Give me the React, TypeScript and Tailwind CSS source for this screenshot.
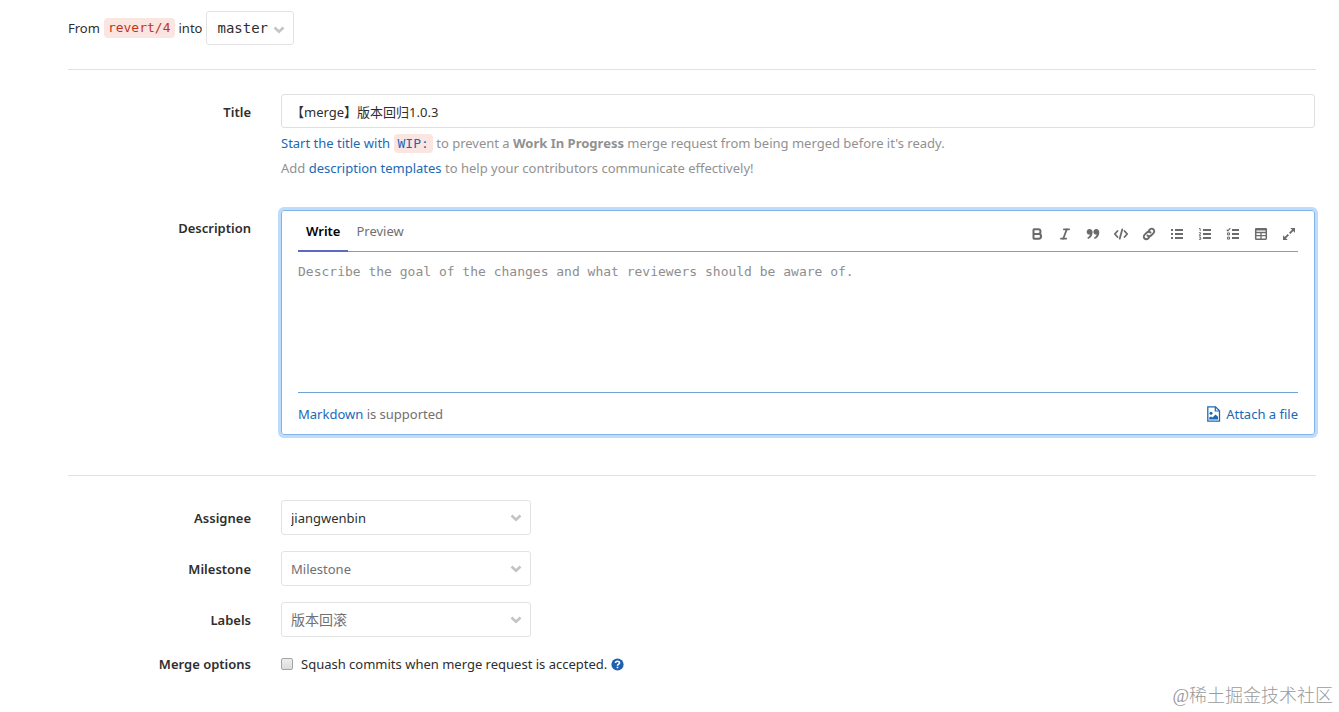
import React, { useState } from "react";
import { Bold, Italic } from "lucide-react";
import { clsx } from "clsx";

const monoClass = "font-['DejaVu_Sans_Mono',monospace]";
const codeClass = clsx(monoClass, "rounded-sm bg-[#fbe5e1] px-1 py-0.5 text-[13px] leading-4");
const linkClass = "text-[#1b69b6] hover:underline";
const labelClass = "text-right font-semibold";
const rowClass = "grid grid-cols-[183px_minmax(0,1fr)] gap-x-[30px] pr-px";

const QuoteIcon = () => (
  <svg width="16" height="16" viewBox="0 0 16 16" fill="currentColor">
    <path d="M4.6 3C6.5 3 7.6 4.4 7.6 6.3c0 3.300-1.700 5.800-4.600 6.700l-.7-1.300c1.500-.7 2.400-1.700 2.600-3.100-1.800.2-3.200-1-3.200-2.700C1.700 4.200 3 3 4.600 3z" />
    <path d="M11.300 3c1.900 0 3 1.400 3 3.300 0 3.300-1.700 5.800-4.600 6.700L9 11.700c1.500-.7 2.400-1.700 2.600-3.100-1.800.2-3.200-1-3.200-2.700C8.400 4.200 9.700 3 11.300 3z" />
  </svg>
);

const CodeIcon = () => (
  <svg width="16" height="16" viewBox="0 0 16 16" fill="none" stroke="currentColor" strokeWidth="1.800" strokeLinecap="round" strokeLinejoin="round">
    <path d="M4.500 5 1.800 8l2.700 3M11.500 5l2.700 3-2.700 3M9.300 3.300 6.700 12.700" />
  </svg>
);

const LinkIcon = () => (
  <svg width="16" height="16" viewBox="0 0 16 16" fill="none" stroke="currentColor" strokeWidth="1.900" strokeLinecap="round">
    <path d="M6.500 9.500a2.500 2.500 0 0 0 3.600 0l2.400-2.400a2.500 2.500 0 0 0-3.600-3.600L7.800 4.600" />
    <path d="M9.500 6.500a2.500 2.500 0 0 0-3.600 0L3.500 8.900a2.500 2.500 0 0 0 3.600 3.600l1.100-1.100" />
  </svg>
);

const BulletListIcon = () => (
  <svg width="16" height="16" viewBox="0 0 16 16" fill="currentColor">
    <path d="M2 3h2v2H2zM2 7h2v2H2zM2 11h2v2H2zM6 3h8v2H6zM6 7h8v2H6zM6 11h8v2H6z" />
  </svg>
);

const NumberListIcon = () => (
  <svg width="16" height="16" viewBox="0 0 16 16" fill="currentColor">
    <path d="M6 3h8v2H6zM6 7h8v2H6zM6 11h8v2H6z" />
    <path d="M2 2.500h1.200V5M1.900 6.700h1.700v1.200L2 9.300h2M1.900 11h1.800l-.8 1.100h.9v1.300H1.900" fill="none" stroke="currentColor" strokeWidth=".9" />
  </svg>
);

const TaskListIcon = () => (
  <svg width="16" height="16" viewBox="0 0 16 16" fill="currentColor">
    <path d="M7 3h7v2H7zM7 7h7v2H7zM7 11h7v2H7z" />
    <path d="m1.700 3.600 1.200 1.200 2.400-2.600" fill="none" stroke="currentColor" strokeWidth="1.200" />
    <path d="M2.500 6.900h2v2h-2zM2.500 11.100h2v2h-2z" fill="none" stroke="currentColor" strokeWidth="1" />
  </svg>
);

const TableIcon = () => (
  <svg width="16" height="16" viewBox="0 0 16 16" fill="none" stroke="currentColor">
    <rect x="2.700" y="2.700" width="10.600" height="10.600" rx=".7" strokeWidth="1.500" />
    <path d="M2.500 3.500h11" strokeWidth="2" />
    <path d="M2.500 6.500h11M2.500 9.700h11M8 6v7" strokeWidth="1.300" />
  </svg>
);

const ExpandIcon = () => (
  <svg width="16" height="16" viewBox="0 0 16 16" fill="currentColor">
    <path d="M9.300 2H14v4.700zM2 9.300 6.700 14H2z" />
    <path d="m8.700 7.300 3.500-3.500M7.300 8.700l-3.500 3.500" stroke="currentColor" strokeWidth="1.900" />
  </svg>
);

const FileImageIcon = () => (
  <svg width="16" height="16" viewBox="0 0 16 16" className="shrink-0">
    <path d="M1.800.8h7.700l4 4v10.400H1.800z" fill="none" stroke="currentColor" strokeWidth="1.300" />
    <path d="M9.300 1v4h4" fill="none" stroke="currentColor" strokeWidth="1.200" />
    <circle cx="5" cy="7.300" r="1.500" fill="currentColor" />
    <path d="M3.200 13.500v-2l1.800-1 1.500 1 3-3 2.500 2.300v2.700z" fill="currentColor" />
  </svg>
);

const QuestionIcon = () => (
  <svg width="13" height="13" viewBox="0 0 16 16">
    <circle cx="8" cy="8" r="7.500" fill="currentColor" />
    <path d="M5.500 6.200C5.600 4.700 6.600 4 8 4s2.500.8 2.500 2.100C10.500 7.600 8 7.700 8 9.600" fill="none" stroke="#fff" strokeWidth="2" />
    <path d="M7 10.700h2v1.900H7z" fill="#fff" />
  </svg>
);

const Chevron = ({ className }: { className?: string }) => (
  <svg width="12" height="8" viewBox="0 0 12 8" className={clsx("pointer-events-none absolute", className)}>
    <path d="m1.500 1.500 4.500 4.300 4.500-4.300" fill="none" stroke="#c4c4c4" strokeWidth="2.600" />
  </svg>
);

const tools = [
  { name: "Bold", icon: <Bold size={14} strokeWidth={3.5} /> },
  { name: "Italic", icon: <Italic size={14} strokeWidth={3} /> },
  { name: "Quote", icon: <QuoteIcon /> },
  { name: "Code", icon: <CodeIcon /> },
  { name: "Link", icon: <LinkIcon /> },
  { name: "Bullet list", icon: <BulletListIcon /> },
  { name: "Numbered list", icon: <NumberListIcon /> },
  { name: "Task list", icon: <TaskListIcon /> },
  { name: "Table", icon: <TableIcon /> },
  { name: "Full screen", icon: <ExpandIcon /> },
];

interface SelectRowProps {
  id: string;
  label: string;
  value: string;
  className?: string;
}

const SelectRow: React.FC<SelectRowProps> = ({ id, label, value, className }) => (
  <div className={clsx(rowClass, "items-center")}>
    <label htmlFor={id} className={labelClass}>{label}</label>
    <div className="relative w-[250px]">
      <select
        id={id}
        className={clsx(
          "block h-[35px] w-full appearance-none rounded-[3px] border border-[#e3e3e3] bg-white pr-8 pl-[9px] outline-none",
          className
        )}
      >
        <option>{value}</option>
      </select>
      <Chevron className="top-3.5 right-[9px]" />
    </div>
  </div>
);

export default function App() {
  const [title, setTitle] = useState("【merge】版本回归1.0.3");
  const [description, setDescription] = useState("");
  const [squash, setSquash] = useState(false);

  return (
    <div className="relative min-h-screen bg-white pt-[11px] pr-[23px] pb-8 pl-[68px] font-['Noto_Sans','Noto_Sans_CJK_SC',sans-serif] text-[13px] leading-5 text-[#2e2e2e]">
      <form onSubmit={(e) => e.preventDefault()}>
        <div className="flex h-[34px] items-center gap-1">
          <span>From</span>
          <code className={clsx(codeClass, "text-[#c0341d]")}>revert/4</code>
          <label htmlFor="target">into</label>
          <div className="relative">
            <select
              id="target"
              className={clsx(monoClass, "block h-[34px] w-[88px] appearance-none rounded-[3px] border border-[#e3e3e3] bg-white pl-[10px] text-sm outline-none")}
            >
              <option>master</option>
            </select>
            <Chevron className="top-[15px] right-[9px]" />
          </div>
        </div>

        <hr className="mt-6 border-[#e1e1e1]" />

        <div className={clsx(rowClass, "mt-6")}>
          <label htmlFor="title" className={clsx(labelClass, "pt-2")}>Title</label>
          <div>
            <input
              id="title"
              type="text"
              value={title}
              onChange={(e) => setTitle(e.target.value)}
              className="block h-[34px] w-full rounded-[3px] border border-[#dfdfdf] px-[9px] outline-none"
            />
            <p className="mt-[5px] text-[#919191]">
              <a href="#wip" className={linkClass}>
                Start the title with <code className={codeClass}>WIP:</code>
              </a>{" "}
              to prevent a <strong className="font-bold">Work In Progress</strong> merge request from being merged before it's ready.
            </p>
            <p className="mt-[5px] text-[#919191]">
              Add <a href="#templates" className={linkClass}>description templates</a> to help your contributors communicate effectively!
            </p>
          </div>
        </div>

        <div className={clsx(rowClass, "mt-8")}>
          <label htmlFor="description" className={clsx(labelClass, "pt-2")}>Description</label>
          <div className="rounded-[3px] border border-[#80b5ec] px-4 shadow-[0_0_0_3px_#bfdcfb]">
            <div className="flex h-[41px] items-end justify-between border-b border-[#6fa3d3]">
              <div className="-mb-px flex">
                <button type="button" className="h-10 border-b-2 border-[#5c6bc0] px-2 font-semibold text-black">Write</button>
                <button type="button" className="h-10 border-b-2 border-transparent px-2 text-[#707070]">Preview</button>
              </div>
              <div className="flex h-[34px] items-center gap-3 pr-px text-[#6b6b6b]">
                {tools.map(({ name, icon }) => (
                  <button key={name} type="button" aria-label={name} className="flex size-4 items-center justify-center">
                    {icon}
                  </button>
                ))}
              </div>
            </div>
            <textarea
              id="description"
              value={description}
              onChange={(e) => setDescription(e.target.value)}
              placeholder="Describe the goal of the changes and what reviewers should be aware of."
              className={clsx(monoClass, "block h-[141px] w-full resize-none border-b border-[#6fa3d3] pt-2.5 text-[13px] leading-5 outline-none placeholder:text-[#8e8e8e]")}
            />
            <div className="flex h-[41px] items-center justify-between text-[#707070]">
              <p>
                <a href="#markdown" className={linkClass}>Markdown</a> is supported
              </p>
              <button type="button" className="flex items-center gap-1 text-[#1b69b6]">
                <FileImageIcon />
                Attach a file
              </button>
            </div>
          </div>
        </div>

        <hr className="mt-10 border-[#e1e1e1]" />

        <div className="mt-6 flex flex-col gap-4">
          <SelectRow id="assignee" label="Assignee" value="jiangwenbin" />
          <SelectRow id="milestone" label="Milestone" value="Milestone" className="text-[#707070]" />
          <SelectRow id="labels" label="Labels" value="版本回滚" className="text-sm text-[#707070]" />
        </div>

        <div className={clsx(rowClass, "mt-[17px]")}>
          <span className={labelClass}>Merge options</span>
          <div className="flex items-center">
            <input
              id="squash"
              type="checkbox"
              checked={squash}
              onChange={(e) => setSquash(e.target.checked)}
              className="size-3 appearance-none rounded-xs border border-[#a3a3a3] bg-linear-to-b from-[#eeeeee] to-[#dcdcdc] checked:bg-[#1b69b6]"
            />
            <label htmlFor="squash" className="ml-2">Squash commits when merge request is accepted.</label>
            <a href="#squash-help" aria-label="About squashing" className="ml-1 text-[#1f5fae]">
              <QuestionIcon />
            </a>
          </div>
        </div>
      </form>

      <div className="absolute right-1.5 bottom-1 font-['Liberation_Serif','Noto_Sans_CJK_SC',serif] text-lg leading-6 font-light text-[#9a9a9a]">
        @稀土掘金技术社区
      </div>
    </div>
  );
}
